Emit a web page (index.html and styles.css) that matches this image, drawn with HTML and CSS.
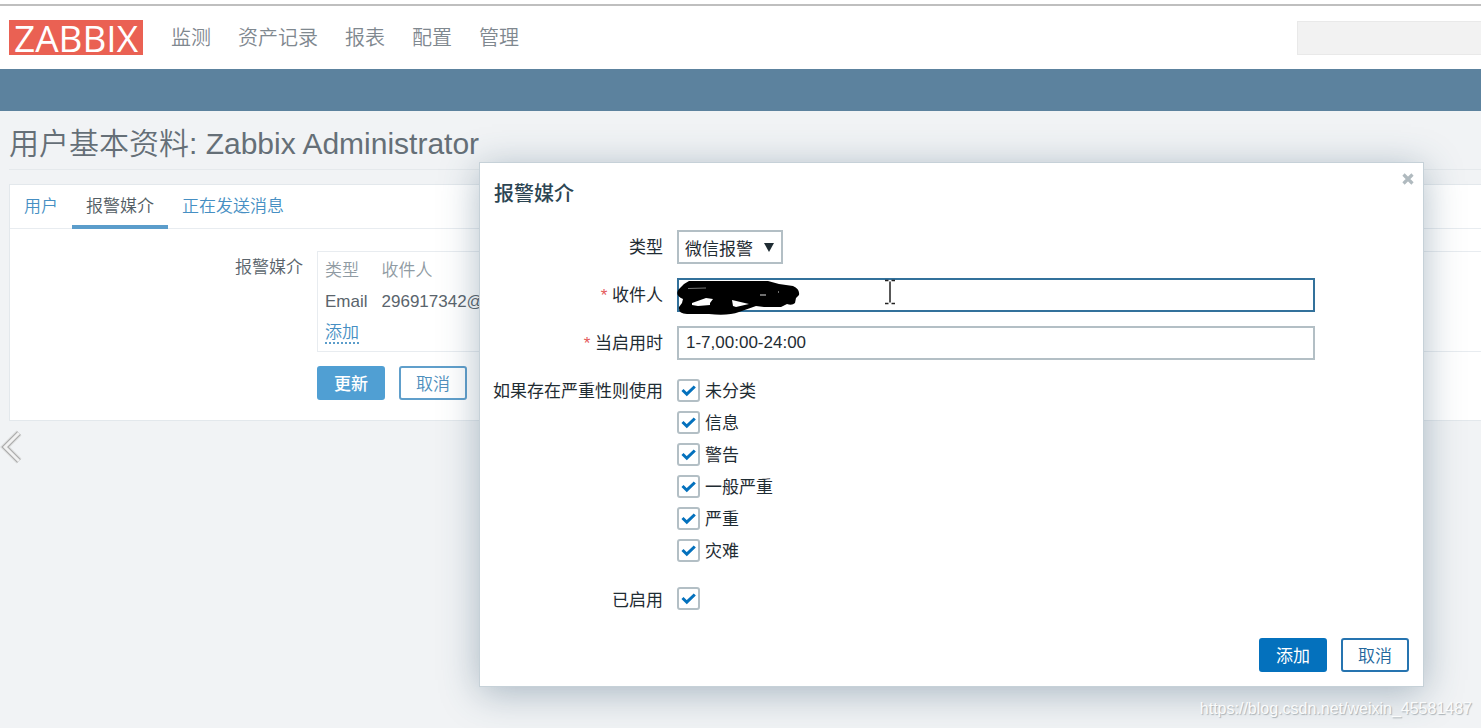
FILE: index.html
```html
<!DOCTYPE html>
<html lang="zh-CN">
<head>
<meta charset="utf-8">
<title>Zabbix - 用户基本资料</title>
<link rel="stylesheet" href="styles.css">
</head>
<body>
<header class="topbar">
  <a class="logo" href="#">ZABBIX</a>
  <nav class="mainnav">
    <a href="#">监测</a>
    <a href="#">资产记录</a>
    <a href="#">报表</a>
    <a href="#">配置</a>
    <a href="#">管理</a>
  </nav>
  <input class="search" type="text" aria-label="搜索">
</header>
<div class="subnav"></div>

<main class="page">
  <h1 class="page-title">用户基本资料: Zabbix Administrator</h1>
  <section class="panel">
    <nav class="tabs">
      <a class="tab" href="#">用户</a>
      <a class="tab tab-active" href="#">报警媒介</a>
      <a class="tab" href="#">正在发送消息</a>
    </nav>
    <div class="profile">
      <div class="profile-label">报警媒介</div>
      <div class="media-box">
        <table class="media">
          <thead><tr><th>类型</th><th>收件人</th></tr></thead>
          <tbody>
            <tr><td>Email</td><td>296917342@</td></tr>
            <tr><td colspan="2"><a class="add" href="#">添加</a></td></tr>
          </tbody>
        </table>
      </div>
      <div class="profile-actions">
        <button class="btn btn-soft" type="button">更新</button>
        <button class="btn btn-soft-outline" type="button">取消</button>
      </div>
    </div>
  </section>
</main>

<svg class="prev" viewBox="0 0 24 38" aria-hidden="true">
  <path d="M19 5 5 19 19 33" fill="none" stroke="#dcdddd" stroke-width="7"/>
  <path d="M19 5 5 19 19 33" fill="none" stroke="#a8a8a8" stroke-width="5"/>
  <path d="M19 5 5 19 19 33" fill="none" stroke="#f1f1f1" stroke-width="3"/>
</svg>

<div class="modal" role="dialog" aria-labelledby="modal-title">
  <button class="close" type="button" aria-label="关闭">
    <svg viewBox="0 0 12 12"><path d="M1.5 1.5 10.500 10.500M10.500 1.500 1.500 10.500" fill="none" stroke="#b0babf" stroke-width="3.200"/></svg>
  </button>
  <h2 class="modal-title" id="modal-title">报警媒介</h2>
  <form class="form">
    <label class="lbl" for="type">类型</label>
    <div class="select-wrap">
      <select class="select" id="type"><option>微信报警</option></select>
      <svg class="arrow" viewBox="0 0 10 9" aria-hidden="true"><path d="M0 0H10L5 9Z" fill="#1f2c33"/></svg>
    </div>

    <label class="lbl req" for="sendto">收件人</label>
    <div class="field">
      <input class="text focused" id="sendto" type="text">
      <svg class="scribble" viewBox="0 0 126 38" aria-hidden="true">
        <path d="M8 6 13 3H92L103 6 110 7 117 8Q124 11 123 17L120 20 119 25Q116 28 111 26L105 29H88L80 28 63 34Q52 38 33 36H11Q2 36 3 29L6 25 7 21Q-2 17 3 11Z" fill="#000"/>
        <path d="M16 25 30 20 37 21 34 25 34 27 22 28 16 27ZM56 22 73 26 60 29 57 28Z" fill="#fff"/>
        <path d="M12 10.500 30 10" stroke="#777" stroke-width="1" fill="none"/>
        <path d="M84 17H90M102 14H103" stroke="#ddd" stroke-width="1" fill="none"/>
      </svg>
      <svg class="caret" viewBox="0 0 12 26" aria-hidden="true"><path d="M1 1.500H4.500M7.500 1.500H11M6 2.500V23.500M1 24.500H4.500M7.500 24.500H11" fill="none" stroke="#222" stroke-width="1.500"/></svg>
    </div>

    <label class="lbl req" for="period">当启用时</label>
    <input class="text" id="period" type="text" value="1-7,00:00-24:00">

    <div class="lbl" id="sev">如果存在严重性则使用</div>
    <div class="checks" role="group" aria-labelledby="sev">
      <label class="check"><input type="checkbox" checked>未分类</label>
      <label class="check"><input type="checkbox" checked>信息</label>
      <label class="check"><input type="checkbox" checked>警告</label>
      <label class="check"><input type="checkbox" checked>一般严重</label>
      <label class="check"><input type="checkbox" checked>严重</label>
      <label class="check"><input type="checkbox" checked>灾难</label>
    </div>

    <label class="lbl lbl-on" for="enabled">已启用</label>
    <div class="check check-on"><input id="enabled" type="checkbox" checked></div>
  </form>
  <div class="modal-actions">
    <button class="btn btn-main" type="button">添加</button>
    <button class="btn btn-outline" type="button">取消</button>
  </div>
</div>

<div class="watermark">https://blog.csdn.net/weixin_45581487</div>
</body>
</html>
```
FILE: styles.css
```css
* { box-sizing: border-box; }

body {
  margin: 0;
  position: relative;
  min-height: 100vh;
  overflow: hidden;
  padding-top: 4px;
  background: linear-gradient(#fff 4px, #f1f3f5 4px);
  color: #5a646c;
  font: 17px/24px "Liberation Sans", "Noto Sans CJK SC", sans-serif;
}

a { color: #468fc3; text-decoration: none; }
button, input, select { font: inherit; margin: 0; }

.topbar {
  display: flex;
  align-items: center;
  height: 65px;
  padding-left: 9px;
  border-top: 2px solid #bfbfbf;
  background: #fff;
}
.logo {
  padding: 0 5px;
  background: #ea6153;
  color: #fff;
  font: 500 37px/35px "Open Sans", sans-serif;
}
.mainnav {
  display: flex;
  gap: 27px;
  margin-left: 28px;
  font-size: 20px;
  font-weight: 350;
}
.mainnav a { color: #7f888f; }
.search {
  width: 184px;
  height: 34px;
  margin-left: auto;
  border: 1px solid #e9e9e9;
  border-right: 0;
  background: #f2f2f2;
}
.subnav { height: 42px; background: #5c829e; }

.page { padding-left: 9px; }
.page-title {
  margin: 0 0 14px;
  padding: 13px 0 5px;
  border-bottom: 1px solid #e5e9ec;
  color: #656f77;
  font-size: 30px;
  font-weight: 350;
  line-height: 40px;
}
.panel {
  border: 1px solid #e3e8ec;
  border-right: 0;
  background: #fff;
}
.tabs {
  display: flex;
  border-bottom: 1px solid #e8ecf0;
}
.tab { padding: 10px 14px 9px; font-weight: 350; }
.tab-active {
  padding-bottom: 5px;
  margin-bottom: -1px;
  border-bottom: 4px solid #5b9dcb;
  color: #535d64;
}
.profile {
  display: grid;
  grid-template-columns: 293px 1fr;
  gap: 14px;
  padding: 22px 0 20px;
}
.profile-label { padding-top: 5px; text-align: right; font-weight: 350; }
.media-box { padding: 3px 7px; border: 1px solid #e8ecf0; border-right: 0; }
.media { border-collapse: collapse; }
.media th, .media td { height: 31px; padding: 0 14px 0 0; text-align: left; font-weight: 350; }
.media th { color: #909ba3; }
.add { border-bottom: 2px dotted #5b9dcb; }
.profile-actions { grid-column: 2; display: flex; gap: 14px; }

.btn {
  height: 34px;
  padding: 3px 15px 0;
  border: 2px solid;
  border-radius: 3px;
  line-height: 24px;
}
.btn-soft { background: #509fd3; border-color: #509fd3; color: #fff; font-weight: 500; }
.btn-soft-outline { background: #fff; border-color: #609fcb; color: #4f8fbd; font-weight: 350; }
.btn-main { background: #0471bd; border-color: #0471bd; color: #fff; }
.btn-outline { background: #fff; border-color: #2674b0; color: #23679d; font-weight: 350; }

.prev { position: absolute; left: 0; top: 428px; width: 24px; height: 38px; }

.modal {
  position: absolute;
  left: 479px;
  right: 57px;
  top: 162px;
  padding: 17px 14px 14px 13px;
  border: 1px solid #c6d1d8;
  background: #fff;
  box-shadow: 0 6px 36px rgba(50, 85, 110, .38);
  color: #1f2c33;
}
.close {
  position: absolute;
  top: 10px;
  right: 9px;
  width: 12px;
  height: 12px;
  padding: 0;
  border: 0;
  background: none;
}
.close svg { display: block; }
.modal-title {
  margin: 0 0 22px;
  padding-left: 1px;
  color: #2c4553;
  font-size: 20px;
  font-weight: 500;
  line-height: 28px;
}
.form {
  display: grid;
  grid-template-columns: 170px 1fr;
  gap: 14px;
  margin-right: 94px;
}
.lbl { padding-top: 6px; text-align: right; white-space: nowrap; }
.req::before { content: "* "; color: #e45959; }
.select-wrap { position: relative; justify-self: start; }
.select {
  appearance: none;
  display: block;
  height: 34px;
  padding: 5px 28px 0 6px;
  border: 2px solid #b3bfc5;
  border-radius: 0;
  background: #fff;
  color: #1f2c33;
}
.arrow { position: absolute; right: 9px; top: 13px; width: 10px; height: 9px; pointer-events: none; }
.field { position: relative; }
.text {
  display: block;
  width: 100%;
  height: 34px;
  padding: 0 7px;
  border: 2px solid #b3bfc5;
  background: #fff;
  color: #1f2c33;
}
.focused { border-color: #33719b; }
.scribble { position: absolute; left: -1px; top: 0; width: 126px; height: 38px; }
.caret { position: absolute; left: 207px; top: 1px; width: 12px; height: 26px; }
.checks { display: grid; gap: 8px; padding-top: 5px; }
.check { display: flex; align-items: flex-start; gap: 5px; height: 24px; line-height: 26px; }
.check input {
  appearance: none;
  width: 23px;
  height: 23px;
  border: 2px solid #b3bfc5;
  border-radius: 3px;
  background: #fff url("data:image/svg+xml,%3Csvg xmlns='http://www.w3.org/2000/svg' viewBox='0 0 19 19'%3E%3Cpath d='M3.500 9 7.800 13.200 15.800 5.500' fill='none' stroke='%230471bd' stroke-width='3'/%3E%3C/svg%3E") center / 19px 19px no-repeat;
}
.lbl-on { padding-top: 2px; }
.lbl-on, .check-on { margin-top: 10px; }
.modal-actions {
  display: flex;
  justify-content: flex-end;
  gap: 14px;
  margin-top: 25px;
}

.watermark {
  position: absolute;
  right: 9px;
  bottom: 7px;
  color: #fafbfb;
  font-size: 16px;
  text-shadow: 1px 1px 1px #a9b1b6;
}
```
